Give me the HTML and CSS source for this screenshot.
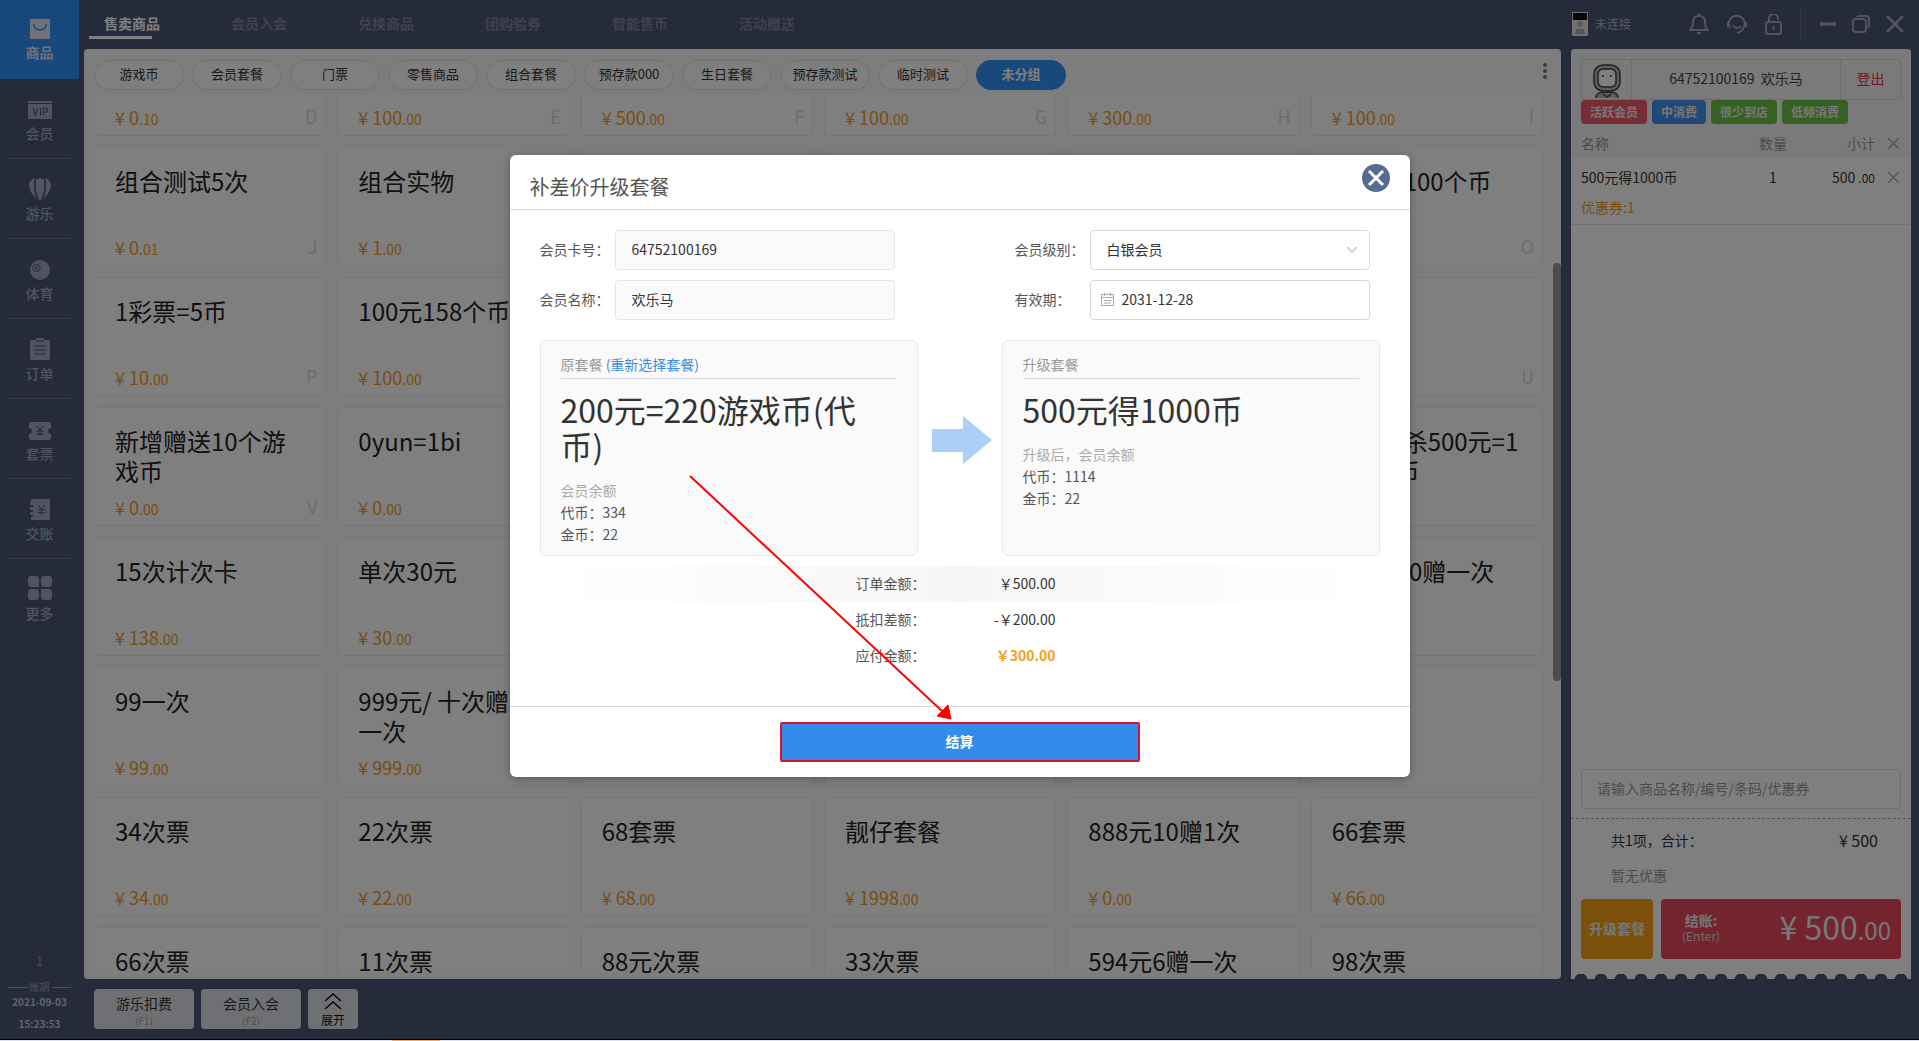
FILE: index.html
```html
<!DOCTYPE html>
<html lang="zh-CN">
<head>
<meta charset="utf-8">
<title>售卖商品</title>
<link rel="stylesheet" href="styles.css">
</head>
<body>
<div class="app">
  <aside class="sidebar">
    <nav class="menu">
      <a href="#" class="menu-item active"><svg width="20" height="20" viewBox="0 0 20 20"><rect width="20" height="20" rx="1" fill="currentColor"/><path d="M4 5v2c2 5 10 5 12 0V5" fill="none" stroke="#3190f8" stroke-width="1.500"/></svg><span>商品</span></a>
      <a href="#" class="menu-item"><svg width="24" height="20" viewBox="0 0 24 20"><path d="M0 1h24v2H0zM0 4h24v15H0z" fill="currentColor"/><path d="M5 8l2.500 7L10 8M12.500 8v7M15.500 15V8h2a2 2 0 0 1 0 4h-2" fill="none" stroke="#4c5677" stroke-width="1.200"/></svg><span>会员</span></a>
      <a href="#" class="menu-item"><svg width="22" height="22" viewBox="0 0 22 22"><path d="M8 22C3 16 0 12 0 7 0 3 3 1 6 0 4 7 5 15 8 22zM14 22c5-6 8-10 8-15 0-4-3-6-6-7 2 7 1 15-2 22zM11 0c2 0 3 1 4 2 1 7 0 14-3 20h-2C7 16 6 9 7 2c1-1 2-2 4-2z" fill="currentColor"/></svg><span>游乐</span></a>
      <a href="#" class="menu-item"><svg width="20" height="20" viewBox="0 0 20 20"><circle cx="10" cy="10" r="10" fill="currentColor"/><circle cx="6.500" cy="8" r="3.700" fill="none" stroke="#4c5677"/><path d="M5 7h3M5 9h3" stroke="#4c5677"/></svg><span>体育</span></a>
      <a href="#" class="menu-item"><svg width="20" height="22" viewBox="0 0 20 22"><path d="M2 2h4V0h8v2h4a2 2 0 0 1 2 2v16a2 2 0 0 1-2 2H2a2 2 0 0 1-2-2V4a2 2 0 0 1 2-2z" fill="currentColor"/><path d="M6 3h8M4 8h12M4 12h12M4 16h12" stroke="#4c5677" stroke-width="1.200"/></svg><span>订单</span></a>
      <a href="#" class="menu-item"><svg width="22" height="18" viewBox="0 0 22 18"><path d="M2 0h18a2 2 0 0 1 2 2v4a3 3 0 0 0 0 6v4a2 2 0 0 1-2 2H2a2 2 0 0 1-2-2v-4a3 3 0 0 0 0-6V2a2 2 0 0 1 2-2z" fill="currentColor"/><path d="M8 4l3 4 3-4M11 8v6M7 9h8M7 12h8" fill="none" stroke="#4c5677" stroke-width="1.200"/></svg><span>套票</span></a>
      <a href="#" class="menu-item"><svg width="20" height="21" viewBox="0 0 20 21"><path d="M1 0h18a1 1 0 0 1 1 1v19a1 1 0 0 1-1 1H1v-3h2v-2H0v-3h3v-2H0V8h3V6H0V3h1z" fill="currentColor"/><path d="M8 6l3.500 4L15 6M11.500 10v6M8 11h7M8 13.500h7" fill="none" stroke="#4c5677"/></svg><span>交账</span></a>
      <a href="#" class="menu-item"><svg width="24" height="24" viewBox="0 0 24 24" fill="currentColor"><path d="M3 0h5a3 3 0 0 1 3 3v8H3a3 3 0 0 1-3-3V3a3 3 0 0 1 3-3zM16 0h5a3 3 0 0 1 3 3v5a3 3 0 0 1-3 3h-5a3 3 0 0 1-3-3V3a3 3 0 0 1 3-3zM3 13h5a3 3 0 0 1 3 3v5a3 3 0 0 1-3 3H3a3 3 0 0 1-3-3v-5a3 3 0 0 1 3-3zM13 13h8a3 3 0 0 1 3 3v5a3 3 0 0 1-3 3h-5a3 3 0 0 1-3-3z"/></svg><span>更多</span></a>
    </nav>
    <div class="clock">
      <span class="shift">1</span>
      <span class="period">账期</span>
      <span class="date">2021-09-03</span>
      <span class="time">15:23:53</span>
    </div>
  </aside>

  <div class="work">
    <header class="topbar">
      <nav class="tabs">
        <a href="#" class="tab active">售卖商品</a>
        <a href="#" class="tab">会员入会</a>
        <a href="#" class="tab">兑换商品</a>
        <a href="#" class="tab">团购验券</a>
        <a href="#" class="tab">智能售币</a>
        <a href="#" class="tab">活动赠送</a>
      </nav>
      <div class="device"><svg width="16" height="24" viewBox="0 0 16 24"><rect width="16" height="24" rx="1" fill="#e6e3e0"/><rect x="1" y="1" width="14" height="7" fill="#111"/><circle cx="8" cy="12" r="2" fill="none" stroke="#777"/><path d="M4 17h8l1 5H3z" fill="#aaa"/></svg><span>未连接</span></div>
      <div class="tools">
        <button class="icon-btn" aria-label="通知"><svg width="20" height="22" viewBox="0 0 20 22" fill="none" stroke="currentColor" stroke-width="2"><path d="M1 17h18c-2-2-3-3-3-8 0-4-2-6-6-6s-6 2-6 6c0 5-1 6-3 8zM10 3V0"/><path d="M8 20h4"/></svg></button>
        <button class="icon-btn" aria-label="客服"><svg width="20" height="20" viewBox="0 0 20 20" fill="none" stroke="currentColor" stroke-width="2"><path d="M3 14a8 8 0 1 1 14-1c-1 3-4 5-7 6"/><path d="M1 8v5M19 8v5M6 11c1 3 5 4 8 1"/></svg></button>
        <button class="icon-btn" aria-label="锁定"><svg width="17" height="21" viewBox="0 0 17 21" fill="none" stroke="currentColor" stroke-width="2"><rect x="1" y="8" width="15" height="12" rx="2"/><path d="M4 8V5a4 4 0 0 1 9-1v2M8.500 12v4"/></svg></button>
      </div>
      <div class="window-tools">
        <button class="icon-btn" aria-label="最小化"><svg width="16" height="20" viewBox="0 0 16 20"><path d="M0 10h16" stroke="currentColor" stroke-width="3"/></svg></button>
        <button class="icon-btn" aria-label="还原"><svg width="18" height="18" viewBox="0 0 18 18" fill="none" stroke="currentColor" stroke-width="2"><rect x="1" y="4" width="13" height="13" rx="3"/><path d="M5 2c1-1 1-1 3-1h6a3 3 0 0 1 3 3v6c0 2 0 2-1 3"/></svg></button>
        <button class="icon-btn" aria-label="关闭"><svg width="18" height="18" viewBox="0 0 18 18"><path d="M1 1l16 16M17 1L1 17" stroke="currentColor" stroke-width="2.500"/></svg></button>
      </div>
    </header>

    <div class="panels">
      <main class="goods">
        <div class="filters">
          <button class="pill">游戏币</button>
          <button class="pill">会员套餐</button>
          <button class="pill">门票</button>
          <button class="pill">零售商品</button>
          <button class="pill">组合套餐</button>
          <button class="pill">预存款000</button>
          <button class="pill">生日套餐</button>
          <button class="pill">预存款测试</button>
          <button class="pill">临时测试</button>
          <button class="pill active">未分组</button>
          <button class="more" aria-label="更多分组"><i></i><i></i><i></i></button>
        </div>
        <div class="scroller">
          <div class="grid">
            <article class="card"><p class="price">¥ 0<small>.10</small></p><b class="key">D</b></article>
            <article class="card"><p class="price">¥ 100<small>.00</small></p><b class="key">E</b></article>
            <article class="card"><p class="price">¥ 500<small>.00</small></p><b class="key">F</b></article>
            <article class="card"><p class="price">¥ 100<small>.00</small></p><b class="key">G</b></article>
            <article class="card"><p class="price">¥ 300<small>.00</small></p><b class="key">H</b></article>
            <article class="card"><p class="price">¥ 100<small>.00</small></p><b class="key">I</b></article>

            <article class="card"><h3>组合测试5次</h3><p class="price">¥ 0<small>.01</small></p><b class="key">J</b></article>
            <article class="card"><h3>组合实物</h3><p class="price">¥ 1<small>.00</small></p></article>
            <article class="card"></article>
            <article class="card"></article>
            <article class="card"></article>
            <article class="card"><h3>新会员100个币</h3><b class="key">O</b></article>

            <article class="card"><h3>1彩票=5币</h3><p class="price">¥ 10<small>.00</small></p><b class="key">P</b></article>
            <article class="card"><h3>100元158个币</h3><p class="price">¥ 100<small>.00</small></p></article>
            <article class="card"></article>
            <article class="card"></article>
            <article class="card"></article>
            <article class="card"><b class="key">U</b></article>

            <article class="card"><h3>新增赠送10个游戏币</h3><p class="price">¥ 0<small>.00</small></p><b class="key">V</b></article>
            <article class="card"><h3>0yun=1bi</h3><p class="price">¥ 0<small>.00</small></p></article>
            <article class="card"></article>
            <article class="card"></article>
            <article class="card"></article>
            <article class="card"><h3>限时秒杀500元=1000个币</h3></article>

            <article class="card"><h3>15次计次卡</h3><p class="price">¥ 138<small>.00</small></p></article>
            <article class="card"><h3>单次30元</h3><p class="price">¥ 30<small>.00</small></p></article>
            <article class="card"></article>
            <article class="card"></article>
            <article class="card"></article>
            <article class="card"><h3>980元10赠一次</h3></article>

            <article class="card"><h3>99一次</h3><p class="price">¥ 99<small>.00</small></p></article>
            <article class="card"><h3>999元/ 十次赠送一次</h3><p class="price">¥ 999<small>.00</small></p></article>
            <article class="card"></article>
            <article class="card"></article>
            <article class="card"></article>
            <article class="card"></article>

            <article class="card"><h3>34次票</h3><p class="price">¥ 34<small>.00</small></p></article>
            <article class="card"><h3>22次票</h3><p class="price">¥ 22<small>.00</small></p></article>
            <article class="card"><h3>68套票</h3><p class="price">¥ 68<small>.00</small></p></article>
            <article class="card"><h3>靓仔套餐</h3><p class="price">¥ 1998<small>.00</small></p></article>
            <article class="card"><h3>888元10赠1次</h3><p class="price">¥ 0<small>.00</small></p></article>
            <article class="card"><h3>66套票</h3><p class="price">¥ 66<small>.00</small></p></article>

            <article class="card"><h3>66次票</h3></article>
            <article class="card"><h3>11次票</h3></article>
            <article class="card"><h3>88元次票</h3></article>
            <article class="card"><h3>33次票</h3></article>
            <article class="card"><h3>594元6赠一次</h3></article>
            <article class="card"><h3>98次票</h3></article>
          </div>
        </div>
        <div class="scrollbar"></div>
      </main>

      <section class="cart">
        <div class="cart-head">
          <div class="member">
            <div class="avatar"><svg width="28" height="34" viewBox="0 0 28 34" fill="#b9b9b9" stroke="#444" stroke-width="1.500"><path d="M3 34c0-5 4-6 11-6s11 1 11 6"/><rect x="1" y="1" width="26" height="26" rx="9"/><rect x="5" y="5" width="18" height="18" rx="5" fill="#fff"/><path d="M10 11v2M18 11v2M10 30l4 3 4-3" fill="none"/></svg></div>
            <div class="member-name">64752100169&nbsp; 欢乐马</div>
            <button class="logout">登出</button>
          </div>
          <div class="tags">
            <span class="tag red">活跃会员</span><span class="tag blue">中消费</span><span class="tag green">很少到店</span><span class="tag green">低频消费</span>
          </div>
        </div>
        <table class="items">
          <thead><tr><th class="name">名称</th><th class="qty">数量</th><th class="sum">小计</th><th class="del"><button class="icon-btn" aria-label="清空"><svg width="11" height="11" viewBox="0 0 11 11"><path d="M0 0l11 11M11 0L0 11" stroke="currentColor" stroke-width="1.200"/></svg></button></th></tr></thead>
          <tbody>
            <tr><td class="name">500元得1000币</td><td class="qty">1</td><td class="sum">500 <small>.00</small></td><td class="del"><button class="icon-btn" aria-label="删除"><svg width="11" height="11" viewBox="0 0 11 11"><path d="M0 0l11 11M11 0L0 11" stroke="currentColor" stroke-width="1.200"/></svg></button></td></tr>
            <tr class="coupon"><td colspan="4">优惠券:1</td></tr>
          </tbody>
        </table>
        <div class="search"><input type="text" aria-label="搜索商品" placeholder="请输入商品名称/编号/条码/优惠券"></div>
        <div class="totals">
          <p class="total"><span>共1项，合计：</span><strong>¥ 500</strong></p>
          <p class="discount">暂无优惠</p>
        </div>
        <div class="pay-row">
          <button class="upgrade">升级套餐</button>
          <button class="pay"><span class="pay-label"><b>结账:</b><span>(Enter)</span></span><span class="pay-sum">¥ 500<small>.00</small></span></button>
        </div>
        <div class="scallops"></div>
      </section>
    </div>

    <footer class="shortcuts">
      <button class="shortcut">游乐扣费<small>(F1)</small></button>
      <button class="shortcut">会员入会<small>(F2)</small></button>
      <button class="expand"><svg width="18" height="17" viewBox="0 0 18 17" fill="none" stroke="currentColor" stroke-width="1.500"><path d="M1 8l8-7 8 7M1 16l8-7 8 7"/></svg>展开</button>
    </footer>
  </div>

  <div class="overlay">
    <div class="dialog" role="dialog" aria-labelledby="dialog-title">
      <header class="dialog-head">
        <h2 id="dialog-title">补差价升级套餐</h2>
        <button class="close" aria-label="关闭"><svg width="16" height="16" viewBox="0 0 16 16"><path d="M1 1l14 14M15 1L1 15" stroke="#fff" stroke-width="3"/></svg></button>
      </header>
      <div class="dialog-body">
        <form class="form">
          <div class="field"><label for="card">会员卡号：</label><input id="card" class="control locked" value="64752100169" readonly></div>
          <div class="field right"><label for="level">会员级别：</label><div class="control-wrap"><select id="level" class="control"><option>白银会员</option></select><svg class="chevron" width="12" height="7" viewBox="0 0 12 7"><path d="M1 1l5 5 5-5" fill="none" stroke="#bbb" stroke-width="1.200"/></svg></div></div>
          <div class="field"><label for="name">会员名称：</label><input id="name" class="control locked" value="欢乐马" readonly></div>
          <div class="field right"><label for="expiry">有效期：</label><div class="control-wrap"><input id="expiry" class="control dated" value="2031-12-28"><svg class="calendar" width="13" height="13" viewBox="0 0 13 13" fill="none" stroke="#aaa"><path d="M.5 1.500h12v11H.5zM.5 4.500h12M3.500 0v3M9.500 0v3M3 7.500h7M3 10h7"/></svg></div></div>
        </form>
        <div class="compare">
          <section class="plan">
            <h4>原套餐 <a href="#">(重新选择套餐)</a></h4>
            <p class="plan-name">200元=220游戏币(代币)</p>
            <p class="balance">会员余额</p>
            <p>代币：334</p>
            <p>金币：22</p>
          </section>
          <svg class="to" width="60" height="48" viewBox="0 0 60 48"><path d="M0 13h31V0l29 24-29 24V36H0z" fill="#accff7"/></svg>
          <section class="plan">
            <h4>升级套餐</h4>
            <p class="plan-name">500元得1000币</p>
            <p class="balance">升级后，会员余额</p>
            <p>代币：1114</p>
            <p>金币：22</p>
          </section>
        </div>
        <dl class="summary">
          <div class="line shaded"><dt>订单金额：</dt><dd>￥500.00</dd></div>
          <div class="line"><dt>抵扣差额：</dt><dd>-￥200.00</dd></div>
          <div class="line due"><dt>应付金额：</dt><dd>￥300.00</dd></div>
        </dl>
      </div>
      <footer class="dialog-foot"><button class="settle">结算</button></footer>
      <svg class="pointer" width="264" height="246" viewBox="0 0 264 246"><path d="M1 1l252 235" stroke="#f00" stroke-width="2"/><path d="M262 244l-14-3 11-11z" fill="#f00" stroke="#f00"/></svg>
    </div>
  </div>
</div>
<div class="taskbar"><i></i></div>
</body>
</html>
```
FILE: styles.css
```css
* { box-sizing: border-box; }
body, h2, h3, h4, p, dl, dd { margin: 0; font-weight: 400; }
body {
  display: flex;
  flex-direction: column;
  height: 100vh;
  overflow: hidden;
  font: 14px/20px "Noto Sans CJK SC", sans-serif;
  color: #333;
}
button, input, select { font: inherit; color: inherit; }
button { padding: 0; border: 0; background: none; cursor: pointer; }
a { text-decoration: none; color: inherit; }
svg { display: block; flex: none; }

.app {
  position: relative;
  flex: 1;
  min-height: 0;
  display: flex;
  background: #4c5677;
}
.work { flex: 1; min-width: 0; display: flex; flex-direction: column; }

/* sidebar */
.sidebar {
  width: 84px;
  display: flex;
  flex-direction: column;
  justify-content: space-between;
  color: #a2a8bc;
}
.menu-item {
  position: relative;
  width: 79px;
  height: 80px;
  display: flex;
  flex-direction: column;
  align-items: center;
  justify-content: flex-end;
  gap: 3px;
  padding-bottom: 17px;
  font-weight: 500;
}
.menu-item + .menu-item:not(:last-child)::after {
  content: "";
  position: absolute;
  left: 8px;
  right: 9px;
  bottom: 1px;
  height: 1px;
  background: #737b94;
}
.menu-item.active { height: 79px; margin-bottom: 1px; background: #3190f8; color: #dfe6f0; font-weight: 700; }
.clock {
  width: 79px;
  display: flex;
  flex-direction: column;
  align-items: center;
  padding-bottom: 6px;
  font-size: 10px;
}
.shift { font-size: 12px; line-height: 20px; color: #9aa0b2; margin-bottom: 8px; }
.period {
  align-self: stretch;
  display: flex;
  align-items: center;
  gap: 2px;
  margin: 0 8px;
  line-height: 16px;
  color: #9aa0b2;
}
.period::before, .period::after { content: ""; flex: 1; height: 1px; background: #9aa0b2; }
.date { line-height: 14px; margin-bottom: 6px; font-weight: 700; color: #c3c7d3; }
.time { line-height: 18px; font-weight: 700; color: #c3c7d3; }

/* top bar */
.topbar {
  display: flex;
  align-items: center;
  height: 49px;
  padding: 0 15px 1px 5px;
  color: #a5aab9;
}
.tabs { flex: 1; display: flex; align-self: flex-start; }
.tab {
  width: 127px;
  height: 39px;
  padding: 13px 0 0 15px;
  font-weight: 700;
  color: #7f8599;
}
.tab.active {
  color: #fff;
  background: linear-gradient(#fff, #fff) left bottom / 63px 3px no-repeat;
}
.device { display: flex; align-items: center; gap: 7px; margin-right: 58px; font-size: 12px; color: #b0b5c2; }
.icon-btn { display: inline-flex; align-items: center; justify-content: center; }
.tools { display: flex; align-items: center; gap: 18px; padding-right: 18px; }
.window-tools {
  display: flex;
  align-items: center;
  gap: 16px;
  height: 32px;
  padding-left: 19px;
  border-left: 1px solid #646d89;
}

/* goods */
.panels { flex: 1; min-height: 0; display: flex; gap: 10px; padding-right: 8px; }
.goods {
  position: relative;
  flex: 1;
  min-width: 0;
  display: flex;
  flex-direction: column;
  padding: 11px 18px 6px 10px;
  border-radius: 4px;
  background: #fafafa;
}
.filters { display: flex; gap: 8px; height: 35px; }
.pill {
  width: 90px;
  height: 30px;
  border: 1px solid #dfe2e6;
  border-radius: 15px;
  background: #fff;
  font-size: 13px;
  line-height: 20px;
  padding-bottom: 2px;
}
.pill.active { border-color: #3190f8; background: #3190f8; color: #fff; font-weight: 700; }
.more {
  display: flex;
  flex-direction: column;
  gap: 2px;
  align-self: flex-start;
  margin: 3px -4px 0 auto;
}
.more i { width: 4px; height: 4px; border-radius: 2px; background: #777; }
.scroller { flex: 1; min-height: 0; overflow: hidden; }
.grid {
  display: grid;
  grid-template-columns: repeat(6, 1fr);
  grid-auto-rows: 119px;
  gap: 11px;
  margin-top: -78px;
}
.card {
  position: relative;
  display: flex;
  flex-direction: column;
  padding: 18px 20px 4px;
  border: 1px solid #eceff1;
  border-radius: 4px;
  background: #fff;
}
.card h3 { font-size: 24px; line-height: 30px; word-break: break-all; color: #222; }
.price { margin-top: auto; font-size: 18px; line-height: 24px; color: #f59a23; }
.price small { font-size: 14px; }
.key {
  position: absolute;
  right: 8px;
  bottom: 7px;
  font-size: 18px;
  font-weight: 400;
  line-height: 24px;
  color: #d9dbde;
}
.scrollbar {
  position: absolute;
  top: 23%;
  right: 0;
  width: 8px;
  height: 45%;
  border-radius: 4px;
  background: #97999b;
}

/* cart */
.cart {
  width: 340px;
  display: flex;
  flex-direction: column;
  border-radius: 4px 4px 0 0;
  background: #fff;
}
.cart-head { padding: 10px 10px 4px; background: #f4f4f4; border-radius: 4px 4px 0 0; }
.member {
  display: flex;
  height: 41px;
  border: 1px solid #d5d9df;
  border-radius: 4px;
}
.avatar { width: 50px; padding: 4px 0 0 11px; border-right: 1px solid #d5d9df; }
.member-name { flex: 1; line-height: 36px; text-align: center; color: #444; }
.logout { width: 60px; padding-bottom: 3px; border-left: 1px solid #d5d9df; color: #e0364f; }
.tags { display: flex; gap: 5px; }
.tag {
  height: 24px;
  padding: 0 9px;
  border-radius: 4px;
  font-size: 12px;
  font-weight: 700;
  line-height: 24px;
  color: #eee;
}
.tag.red { background: #f0596c; }
.tag.blue { background: #4393ee; }
.tag.green { background: #6bc24a; }
.items { width: 100%; border-collapse: collapse; table-layout: fixed; }
.items th { height: 30px; padding: 0; background: #f4f4f4; font-weight: 400; color: #999; }
.items td { height: 38px; padding: 0; }
.items .name { width: 177px; padding-left: 10px; text-align: left; }
.items .qty { width: 50px; text-align: center; }
.items .sum { text-align: right; }
.items td.sum small { font-size: 12px; }
.items .del { width: 36px; padding-right: 12px; text-align: right; color: #999; }
.items .coupon td { height: 28px; padding: 0 10px 6px; border-bottom: 1px solid #e4e4e4; color: #f59a23; }
.search { margin-top: auto; padding: 0 10px 9px; border-bottom: 1px dashed #aaa; }
.search input {
  width: 100%;
  height: 40px;
  padding: 0 15px 2px;
  border: 1px solid #d5d9df;
  border-radius: 4px;
  background: #fff;
}
.search input::placeholder { color: #999; opacity: 1; }
.totals { padding: 11px 33px 14px 40px; }
.total { display: flex; justify-content: space-between; }
.total strong { font-size: 16px; font-weight: 400; }
.discount { margin-top: 15px; color: #999; line-height: 20px; }
.pay-row { display: flex; gap: 8px; padding: 0 10px 15px; }
.upgrade { width: 72px; height: 60px; padding-bottom: 2px; border-radius: 4px; background: #f5a116; color: #eee; font-weight: 700; }
.pay {
  flex: 1;
  display: flex;
  align-items: center;
  justify-content: space-between;
  padding: 0 10px 2px 21px;
  border-radius: 4px;
  background: #e6485f;
  color: #eee;
}
.pay-label { display: flex; flex-direction: column; line-height: 15px; }
.pay-label b { font-weight: 700; }
.pay-label span { font-size: 12px; color: #ddd; }
.pay-sum { font-size: 32px; line-height: 40px; }
.pay-sum small { font-size: 24px; }
.scallops {
  height: 5px;
  background: radial-gradient(circle at 10px 6px, #4c5677 6px, #fff0 7px) 0 0 / 20px 5px repeat-x;
}

/* shortcuts */
.shortcuts { display: flex; gap: 7px; padding: 10px; height: 60px; }
.shortcut, .expand {
  display: flex;
  flex-direction: column;
  align-items: center;
  width: 100px;
  border-radius: 4px;
  background: #dfe1e6;
  line-height: 18px;
  padding-top: 5px;
}
.shortcut small { font-size: 10px; line-height: 18px; color: #999; }
.expand { width: 50px; padding-top: 4px; gap: 1px; font-size: 12px; color: #111; }

/* dialog */
.overlay {
  position: absolute;
  inset: 0;
  display: flex;
  justify-content: center;
  align-items: flex-start;
  padding-top: 155px;
  background: rgba(0, 0, 0, .5);
}
.dialog {
  position: relative;
  width: 900px;
  border-radius: 6px;
  background: #fff;
  box-shadow: 0 2px 8px rgba(0, 0, 0, .3);
}
.dialog-head {
  display: flex;
  justify-content: space-between;
  padding: 9px 20px 0;
  height: 55px;
  border-bottom: 1px solid #d5d8dc;
}
.dialog-head h2 { font-size: 20px; line-height: 46px; color: #555; }
.close {
  display: flex;
  align-items: center;
  justify-content: center;
  width: 28px;
  height: 28px;
  border-radius: 50%;
  background: #566b94;
}
.dialog-body { padding: 20px 30px 32px; color: #555; }
.form {
  display: grid;
  grid-template-columns: 355px 355px;
  justify-content: space-between;
  gap: 10px;
  padding-right: 10px;
}
.field { display: flex; align-items: center; }
.field label { width: 75px; padding-bottom: 2px; }
.control {
  width: 280px;
  height: 40px;
  padding: 0 16px 2px;
  border: 1px solid #d5d8dc;
  border-radius: 4px;
  background: #fff;
  color: #333;
  appearance: none;
}
.control.locked { background: #fafafa; border-color: #e2e4e7; }
.control.dated { padding-left: 31px; }
.control-wrap { position: relative; }
.chevron { position: absolute; right: 12px; top: 16px; }
.calendar { position: absolute; left: 11px; top: 13px; }
.compare { display: flex; align-items: center; justify-content: space-between; margin-top: 20px; }
.plan {
  width: 378px;
  height: 216px;
  padding: 12px 20px;
  border: 1px solid #e6e9ec;
  border-radius: 6px;
  background: #fafafa;
  line-height: 22px;
}
.plan h4 {
  height: 26px;
  margin-bottom: 12px;
  border-bottom: 1px solid #d5d8dc;
  font-size: 14px;
  color: #999;
}
.plan h4 a { color: #3a8ee6; }
.plan-name { margin-bottom: 16px; font-size: 32px; line-height: 36px; color: #333; word-break: break-all; }
.balance { color: #aaa; }
.to { margin: 0 0 16px 4px; }
.summary { margin-top: 10px; }
.line { display: flex; height: 36px; padding-left: 316px; line-height: 34px; }
.shaded { background: linear-gradient(90deg, #fff, #f6f6f6 50%, #fff); }
.line dt { width: 80px; }
.line dd { width: 120px; text-align: right; color: #333; }
.due dd { color: #f5a11c; font-weight: 700; }
.dialog-foot {
  display: flex;
  justify-content: center;
  padding: 15px 0;
  border-top: 1px solid #d5d8dc;
}
.settle {
  width: 360px;
  height: 40px;
  padding-bottom: 2px;
  border: 2px solid #dd1230;
  border-radius: 2px;
  background: #338bec;
  color: #fff;
  font-weight: 700;
}
.pointer { position: absolute; left: 179px; top: 320px; }

.taskbar { height: 2px; border-top: 1px solid #000; background: #dfe0ee; }
.taskbar i { display: block; width: 48px; height: 1px; margin-left: 392px; background: #f9a65a; }
```
